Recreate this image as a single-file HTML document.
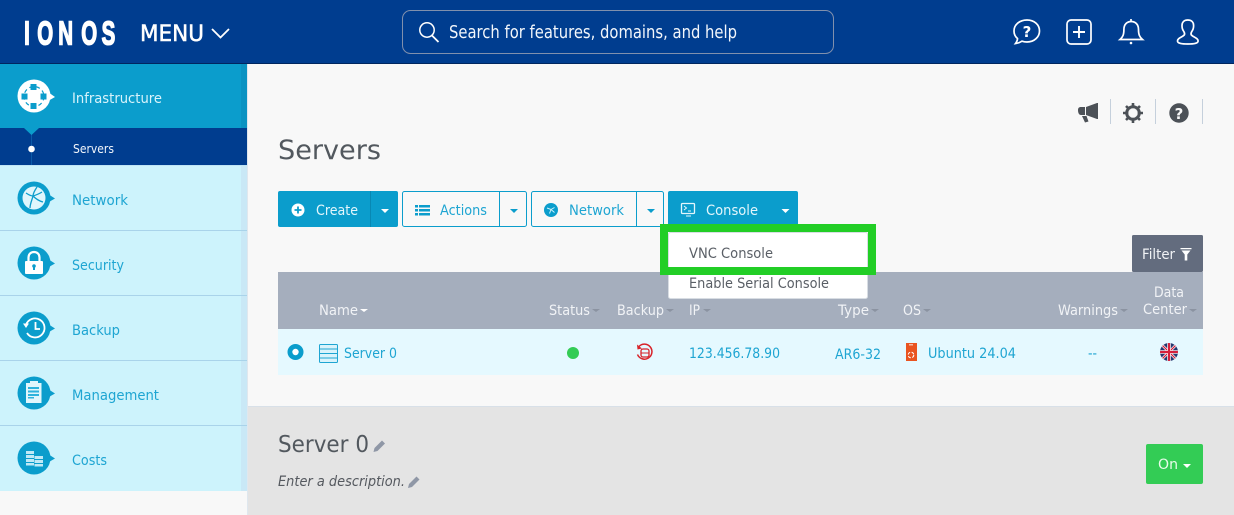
<!DOCTYPE html>
<html lang="en"><head><meta charset="utf-8"><title>Servers</title>
<style>
html,body{margin:0;padding:0;width:1234px;height:515px;overflow:hidden;background:#f8f8f8}
svg{display:block;position:absolute;left:0;top:0}
text{font-family:"DejaVu Sans","Liberation Sans",sans-serif;white-space:pre}
</style></head><body>
<svg width="1234" height="515" viewBox="0 0 1234 515" xmlns="http://www.w3.org/2000/svg">
<rect width="1234" height="515" fill="#f8f8f8"/>
<!-- header -->
<rect width="1234" height="63" fill="#003d8f"/>
<rect y="63" width="1234" height="1" fill="#00265f"/>
<g transform="translate(0,44.500) scale(.62,1)" fill="#fff" stroke="#fff" stroke-width="1.600" font-size="33" font-weight="700"><text style="font-family:'Liberation Sans',sans-serif" x="39 60 94 131 164" y="0">IONOS</text></g>
<text x="140" y="41" font-size="22" fill="#fff" stroke="#fff" stroke-width=".5" textLength="64" lengthAdjust="spacingAndGlyphs">MENU</text>
<path d="M212 29l8.500 8.500 8.500-8.500" fill="none" stroke="#fff" stroke-width="1.800"/>
<rect x="402.500" y="10.500" width="431" height="43" rx="8" fill="none" stroke="#8090ad"/>
<circle cx="427" cy="30" r="7.200" fill="none" stroke="#fff" stroke-width="1.500"/><path d="M432 35.500l6.500 6.500" stroke="#fff" stroke-width="1.800"/>
<text x="449" y="38" font-size="18" fill="#f2f6fb" textLength="288" lengthAdjust="spacingAndGlyphs">Search for features, domains, and help</text>
<!-- header right icons -->
<g fill="none" stroke="#fff" stroke-width="1.700">
<path d="M1015.500 43.500c1.500-2 2-3.500 2-5-2.500-2-3.500-4.500-3.500-7.500 0-6.500 5.700-11 13-11s12.500 4.800 12.500 11-5.500 11-12.500 11c-2 0-3.500-.3-5-.8-2 1.300-4 2-6.500 2.300z"/>
<rect x="1067" y="20" width="24" height="24" rx="4"/>
<path d="M1079 26v12M1073 32h12" stroke-width="1.900"/>
<path d="M1120 39.500h22.500c-3-2.500-4-5-4-10 0-5-3-8-7.300-8s-7.300 3-7.300 8c0 5-1 7.500-3.900 10zM1131 21v-2"/>
<path d="M1177.500 41c0-3.500 6-4 7-6.500 .5-1.500-.3-2.300-1.300-4-1-1.500-1.200-3.500-1.200-5 0-3.600 2.500-5.500 5.800-5.500s5.800 1.900 5.800 5.500c0 1.500-.2 3.500-1.200 5-1 1.700-1.800 2.500-1.300 4 1 2.500 7 3 7 6.500 0 2.500-4.500 3-10.300 3s-10.300-.5-10.300-3z"/>
</g>
<text x="1027" y="37" font-size="15" font-weight="700" fill="#fff" text-anchor="middle">?</text>
<circle cx="1131" cy="43" r="1.300" fill="#fff"/>
<!-- sidebar -->
<rect x="247" y="64" width="1" height="451" fill="#dfe7ee"/>
<rect y="64" width="247" height="64" fill="#0b9dcc"/>
<rect x="241" y="64" width="6" height="64" fill="#0a93c2"/>
<rect y="128" width="247" height="37" fill="#003d8f"/>
<rect x="31" y="128" width="1" height="37" fill="#0b5ba8"/>
<path d="M24 128h15l-7.500 7z" fill="#0b9dcc"/>
<circle cx="31.500" cy="149" r="3.300" fill="#fff"/>
<rect y="165" width="247" height="326" fill="#cdf3fc"/>
<rect x="241" y="165" width="6" height="326" fill="#c9e8f6"/>
<rect y="165" width="247" height="1" fill="#bfe4f5"/>
<g fill="#a9d3ea"><rect y="230" width="247" height="1"/><rect y="295" width="247" height="1"/><rect y="360" width="247" height="1"/><rect y="425" width="247" height="1"/></g>
<!-- infra icon -->
<circle cx="34" cy="96" r="16.500" fill="#fff"/><path d="M48 92l7 5-7 4z" fill="#fff"/>
<circle cx="34" cy="96.500" r="10" fill="none" stroke="#0b9dcc" stroke-width="1.200" stroke-dasharray="4 3"/>
<g fill="#0b9dcc"><rect x="30.500" y="84" width="6" height="6"/><rect x="30.500" y="103" width="6" height="6"/><rect x="21.500" y="93.500" width="6" height="6"/><rect x="40.500" y="93.500" width="6" height="6"/></g>
<circle cx="34" cy="96.500" r="6.500" fill="#fff"/>
<!-- nav icons -->
<g fill="#0b9dcc">
<circle cx="34" cy="198" r="16.500"/><path d="M48 194l7 4.500-7 4z"/>
<circle cx="34" cy="263" r="16.500"/><path d="M48 259l7 4.500-7 4z"/>
<circle cx="34" cy="328" r="16.500"/><path d="M48 324l7 4.500-7 4z"/>
<circle cx="34" cy="393" r="16.500"/><path d="M48 389l7 4.500-7 4z"/>
<circle cx="34" cy="458" r="16.500"/><path d="M48 454l7 4.500-7 4z"/>
</g>
<!-- network glyph -->
<circle cx="34" cy="198" r="11.500" fill="#dff6fc"/>
<path d="M26 193c3 2 5 3 7 3M33 196c-1 4-3 8-3 12M33 196c3 3 6 5 10 6M37 187c-2 3-4 6-4 9M33 196c3-1 6-2 9-4" stroke="#0b9dcc" stroke-width="1.300" fill="none"/>
<!-- lock -->
<rect x="25" y="261" width="18" height="13" rx="1" fill="#fff"/>
<path d="M28.500 261v-3.500c0-3.300 2.300-5.500 5.500-5.500s5.500 2.200 5.500 5.500v3.500" fill="none" stroke="#fff" stroke-width="2.200"/>
<circle cx="34" cy="266" r="1.800" fill="#0b9dcc"/><rect x="33" y="266" width="2" height="4" fill="#0b9dcc"/>
<!-- backup -->
<path d="M26 325a9.500 9.500 0 1 1 1 8" fill="none" stroke="#fff" stroke-width="1.800"/>
<path d="M23 323.500h6l-3 4.500z" fill="#fff"/>
<path d="M35.500 322v7h4.500" fill="none" stroke="#fff" stroke-width="1.800"/>
<!-- management -->
<rect x="26" y="383" width="15.500" height="20" fill="#dff6fc"/><rect x="30" y="381" width="8" height="3" fill="#dff6fc"/>
<g fill="#2db3dc"><rect x="28" y="387" width="11" height="2"/><rect x="28" y="390.500" width="11" height="2"/><rect x="28" y="394" width="11" height="2"/><rect x="28" y="397" width="6" height="1.500"/></g>
<!-- costs -->
<g fill="#bfe9f6"><rect x="26" y="451" width="8" height="3"/><rect x="26" y="455" width="8" height="3"/><rect x="26" y="459" width="8" height="3"/><rect x="26" y="463" width="8" height="2.500"/><rect x="34.500" y="456" width="8.500" height="3"/><rect x="34.500" y="460" width="8.500" height="3"/><rect x="34.500" y="464" width="8.500" height="2.500"/></g>
<text x="72" y="103" font-size="14.500" fill="#d8f3fb" textLength="90" lengthAdjust="spacingAndGlyphs">Infrastructure</text>
<text x="73" y="153" font-size="12.500" fill="#f0f5fb" textLength="41" lengthAdjust="spacingAndGlyphs">Servers</text>
<g font-size="14.500" fill="#1ea5d2">
<text x="72" y="205" textLength="56" lengthAdjust="spacingAndGlyphs">Network</text>
<text x="72" y="270" textLength="52" lengthAdjust="spacingAndGlyphs">Security</text>
<text x="72" y="335" textLength="48" lengthAdjust="spacingAndGlyphs">Backup</text>
<text x="72" y="400" textLength="87" lengthAdjust="spacingAndGlyphs">Management</text>
<text x="72" y="465" textLength="35" lengthAdjust="spacingAndGlyphs">Costs</text>
</g>
<!-- top right tools -->
<g fill="#c5d0dc"><rect x="1110" y="99" width="1" height="25"/><rect x="1155" y="99" width="1" height="25"/><rect x="1202" y="99" width="1" height="25"/></g>
<path d="M1078 110c0-2 1-3 3-3h4v8h-4c-2 0-3-2-3-5zM1086 107l11-4h1v16h-1l-11-4zM1082 116h4.500l2 5.500-3.500 1z" fill="#4c5157"/>
<circle cx="1133" cy="113" r="6.300" fill="none" stroke="#4c5157" stroke-width="3"/>
<path d="M1133 103v20M1123 113h20M1126 106l14 14M1140 106l-14 14" stroke="#4c5157" stroke-width="2.600"/>
<circle cx="1133" cy="113" r="4.700" fill="#f8f8f8"/>
<circle cx="1179" cy="113" r="9.700" fill="#4c5157"/>
<text x="1179" y="119" font-size="15" font-weight="700" fill="#f8f8f8" text-anchor="middle">?</text>
<!-- title -->
<text x="278" y="159" font-size="27" fill="#52585e" textLength="103" lengthAdjust="spacingAndGlyphs">Servers</text>
<!-- buttons -->
<rect x="278" y="191" width="120" height="36" rx="2" fill="#0b9dcc"/>
<rect x="370" y="191" width="1" height="36" fill="#0888b3"/>
<circle cx="298" cy="210" r="6.500" fill="#fff"/><path d="M298 206.500v7M294.500 210h7" stroke="#0b9dcc" stroke-width="1.800"/>
<text x="316" y="215" font-size="14.500" fill="#e3f6fc" textLength="42" lengthAdjust="spacingAndGlyphs">Create</text>
<path d="M381 209h8l-4 4z" fill="#fff"/>
<rect x="402.500" y="191.500" width="124" height="35" rx="2" fill="#f8f8f8" stroke="#0b9dcc"/>
<rect x="499" y="191" width="1" height="36" fill="#0b9dcc"/>
<g fill="#0b9dcc"><rect x="415" y="205" width="3" height="2.500"/><rect x="419" y="205" width="11" height="2.500"/><rect x="415" y="209" width="3" height="2.500"/><rect x="419" y="209" width="11" height="2.500"/><rect x="415" y="213" width="3" height="2.500"/><rect x="419" y="213" width="11" height="2.500"/></g>
<text x="440" y="215" font-size="14.500" fill="#1ea5d2" textLength="47" lengthAdjust="spacingAndGlyphs">Actions</text>
<path d="M510 209h8l-4 4z" fill="#0b9dcc"/>
<rect x="531.500" y="191.500" width="132" height="35" rx="2" fill="#f8f8f8" stroke="#0b9dcc"/>
<rect x="636" y="191" width="1" height="36" fill="#0b9dcc"/>
<circle cx="551" cy="210" r="7" fill="#0b9dcc"/><path d="M547 208l4 1.500 3.500-2M551 209.500l-1.500 4M551 209.500l3.500 3" stroke="#cdf3fc" stroke-width="1" fill="none"/>
<text x="569" y="215" font-size="14.500" fill="#1ea5d2" textLength="55" lengthAdjust="spacingAndGlyphs">Network</text>
<path d="M647 209h8l-4 4z" fill="#0b9dcc"/>
<rect x="668" y="191" width="130" height="40" rx="2" fill="#0b9dcc"/>
<rect x="681.500" y="203.500" width="13" height="10" rx="1" fill="none" stroke="#e3f6fc" stroke-width="1.300"/>
<path d="M684 206l2.500 2-2.500 2M688 211h3M686 216h5" stroke="#e3f6fc" fill="none"/>
<text x="706" y="215" font-size="14.500" fill="#e3f6fc" textLength="52" lengthAdjust="spacingAndGlyphs">Console</text>
<path d="M781.500 209h8l-4 4z" fill="#fff"/>
<!-- table head -->
<rect x="278" y="272" width="925" height="57" fill="#a5aebd"/>
<rect x="278" y="329" width="925" height="46" fill="#e5f9ff"/>
<rect x="1132" y="235" width="71" height="37" rx="1.500" fill="#636c7e"/>
<text x="1142" y="259" font-size="14.500" fill="#f0f2f5" textLength="33" lengthAdjust="spacingAndGlyphs">Filter</text>
<path d="M1180.500 248h11v1.300h-11zM1181.500 250.500h9l-3.200 4v6h-2.600v-6z" fill="#fff"/>
<g font-size="14.500" fill="#f1f3f6">
<text x="319" y="315" textLength="39" lengthAdjust="spacingAndGlyphs">Name</text>
<text x="549" y="315" textLength="41" lengthAdjust="spacingAndGlyphs">Status</text>
<text x="617" y="315" textLength="47" lengthAdjust="spacingAndGlyphs">Backup</text>
<text x="689" y="315" textLength="11" lengthAdjust="spacingAndGlyphs">IP</text>
<text x="838" y="315" textLength="31" lengthAdjust="spacingAndGlyphs">Type</text>
<text x="903" y="315" textLength="18" lengthAdjust="spacingAndGlyphs">OS</text>
<text x="1058" y="315" textLength="60" lengthAdjust="spacingAndGlyphs">Warnings</text>
<text x="1154" y="297" textLength="30" lengthAdjust="spacingAndGlyphs">Data</text>
<text x="1143" y="314" textLength="44" lengthAdjust="spacingAndGlyphs">Center</text>
</g>
<path d="M360 309h8l-4 3z" fill="#fff"/>
<g fill="#8b93a1"><path d="M592 309h8l-4 3z"/><path d="M666 309h8l-4 3z"/><path d="M703 309h8l-4 3z"/><path d="M871 309h8l-4 3z"/><path d="M923 309h8l-4 3z"/><path d="M1120 309h8l-4 3z"/><path d="M1189 309h8l-4 3z"/></g>
<!-- dropdown -->
<rect x="668.500" y="232.500" width="199" height="66" rx="2" fill="#fff" stroke="#d8dde3"/>
<rect x="664" y="228" width="208" height="43" fill="none" stroke="#22ce26" stroke-width="8"/>
<text x="689" y="258" font-size="14.500" fill="#5a5f66" textLength="84" lengthAdjust="spacingAndGlyphs">VNC Console</text>
<text x="689" y="288" font-size="14.500" fill="#5a5f66" textLength="140" lengthAdjust="spacingAndGlyphs">Enable Serial Console</text>
<!-- row -->
<circle cx="295.500" cy="352" r="8" fill="#0b9dcc"/><circle cx="295.500" cy="352" r="3.200" fill="#fff"/>
<rect x="319.500" y="344.500" width="18" height="18" rx="1" fill="#d9f3fb" stroke="#1ea5d2"/>
<path d="M320 349h17M320 353.500h17M320 358h17" stroke="#1ea5d2"/>
<text x="344" y="358" font-size="14.500" fill="#1ea5d2" textLength="53" lengthAdjust="spacingAndGlyphs">Server 0</text>
<circle cx="573" cy="353" r="6" fill="#33cc55"/>
<path d="M639 346.500a7.500 7.500 0 1 1 -1.500 8" fill="none" stroke="#d8232a" stroke-width="1.500"/>
<path d="M637 344.500l.5 5 4.500-1z" fill="#d8232a"/>
<rect x="641" y="349" width="8" height="8" rx="2" fill="none" stroke="#d8232a" stroke-width="1.300"/><path d="M641 353h8" stroke="#d8232a"/>
<text x="689" y="358" font-size="14.500" fill="#1ea5d2" textLength="91" lengthAdjust="spacingAndGlyphs">123.456.78.90</text>
<text x="835" y="359" font-size="14.500" fill="#1ea5d2" textLength="46" lengthAdjust="spacingAndGlyphs">AR6-32</text>
<rect x="906" y="343" width="11" height="18" fill="#e95420"/>
<circle cx="911" cy="355" r="2.800" fill="none" stroke="#fff" stroke-dasharray="3 1.500"/><rect x="909" y="344" width="4" height="1.500" fill="#fff" opacity=".6"/>
<text x="928" y="358" font-size="14.500" fill="#1ea5d2" textLength="88" lengthAdjust="spacingAndGlyphs">Ubuntu 24.04</text>
<text x="1088" y="358" font-size="14.500" fill="#1ea5d2" textLength="9" lengthAdjust="spacingAndGlyphs">--</text>
<circle cx="1169" cy="352" r="9" fill="#24386f"/>
<clipPath id="f"><circle cx="1169" cy="352" r="9"/></clipPath>
<g clip-path="url(#f)"><path d="M1160 343l18 18M1178 343l-18 18" stroke="#fff" stroke-width="2.600"/><path d="M1160 343l18 18M1178 343l-18 18" stroke="#d5203c" stroke-width="1.200"/><path d="M1169 342v20M1159 352h20" stroke="#fff" stroke-width="3.600"/><path d="M1169 342v20M1159 352h20" stroke="#d5203c" stroke-width="2.200"/></g>
<!-- bottom panel -->
<rect x="248" y="406" width="986" height="109" fill="#e4e4e4"/>
<rect x="248" y="406" width="986" height="1" fill="#d8e0e8"/>
<text x="278" y="452" font-size="23" fill="#52585e" textLength="91" lengthAdjust="spacingAndGlyphs">Server 0</text>
<path d="M373.500 452l1-4 7.500-7.500 3 3-7.500 7.500z" fill="#8f97a6"/>
<text x="278" y="486" font-size="14.500" font-style="italic" fill="#55595f" textLength="127" lengthAdjust="spacingAndGlyphs">Enter a description.</text>
<path d="M408 488l1-4 7.500-7.500 3 3-7.500 7.500z" fill="#8f97a6"/>
<rect x="1146" y="444" width="57" height="40" rx="2" fill="#33cc55"/>
<text x="1158" y="469" font-size="14.500" fill="#e8fbe9" textLength="20" lengthAdjust="spacingAndGlyphs">On</text>
<path d="M1183 464h8l-4 4z" fill="#fff"/>
</svg>
</body></html>
